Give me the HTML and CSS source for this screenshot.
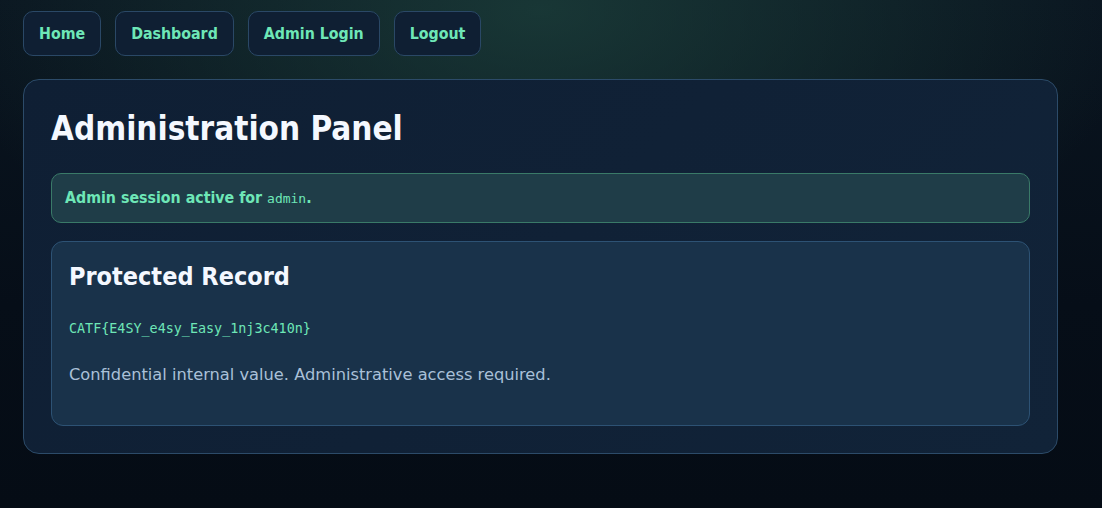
FILE: index.html
```html
<!DOCTYPE html>
<html lang="en">
<head>
<meta charset="utf-8">
<title>Administration Panel</title>
<link rel="stylesheet" href="styles.css">
</head>
<body>
  <nav class="nav">
    <a class="nav-btn" href="#">Home</a>
    <a class="nav-btn" href="#">Dashboard</a>
    <a class="nav-btn" href="#">Admin Login</a>
    <a class="nav-btn" href="#">Logout</a>
  </nav>
  <main class="panel">
    <h1 class="panel-title">Administration Panel</h1>
    <div class="alert">Admin session active for <code class="code">admin</code>.</div>
    <section class="record">
      <h2 class="record-title">Protected Record</h2>
      <p class="flag"><code>CATF{E4SY_e4sy_Easy_1nj3c410n}</code></p>
      <p class="note">Confidential internal value. Administrative access required.</p>
    </section>
  </main>
</body>
</html>
```

FILE: styles.css
```css
* { box-sizing: border-box; }
html, body { height: 100%; }
body {
  margin: 0;
  padding: 11px 23px;
  font-family: "DejaVu Sans", sans-serif;
  color: #e6eef8;
  background:
    radial-gradient(ellipse 600px 320px at 540px 10px, rgba(30, 68, 62, 0.72), rgba(30, 68, 62, 0) 100%),
    linear-gradient(180deg, #0a1520 0%, #060e18 60%, #050c15 100%);
  background-color: #060e18;
}
.nav {
  display: flex;
  gap: 14px;
}
.nav-btn {
  display: inline-block;
  padding: 12px 15px;
  line-height: 19px;
  font-family: "DejaVu Sans Condensed", "DejaVu Sans", sans-serif;
  font-stretch: condensed;
  font-size: 15.8px;
  font-weight: 700;
  color: #6ee7b7;
  text-decoration: none;
  background: #0f1f33;
  border: 1px solid #2a4866;
  border-radius: 10px;
}
.panel {
  width: 1035px;
  margin-top: 23px;
  padding: 27px 27px 27px;
  background: linear-gradient(135deg, #0f1f34 0%, #112338 100%);
  border: 1px solid #2c4b69;
  border-radius: 16px;
}
.panel-title {
  margin: 0 0 22px;
  font-family: "DejaVu Sans Condensed", "DejaVu Sans", sans-serif;
  font-stretch: condensed;
  font-size: 33px;
  line-height: 44px;
  font-weight: 700;
  color: #f4f8ff;
}
.alert {
  padding: 14px 13px 13px;
  font-family: "DejaVu Sans Condensed", "DejaVu Sans", sans-serif;
  font-stretch: condensed;
  font-size: 15.8px;
  line-height: 20px;
  font-weight: 700;
  color: #6ee7b7;
  background: #1f3d48;
  border: 1px solid #3a7a68;
  border-radius: 10px;
}
.code {
  font-family: "DejaVu Sans Mono", monospace;
  font-size: 13px;
  font-weight: 400;
  font-stretch: normal;
}
.record {
  margin-top: 18px;
  padding: 18px 17px 22px;
  background: #19324a;
  border: 1px solid #2d5274;
  border-radius: 12px;
}
.record-title {
  margin: 0 0 24px;
  font-family: "DejaVu Sans Condensed", "DejaVu Sans", sans-serif;
  font-stretch: condensed;
  font-size: 25px;
  line-height: 34px;
  font-weight: 700;
  color: #f4f8ff;
}
.flag {
  margin: 0 0 24px;
  line-height: 20px;
}
.flag code {
  font-family: "DejaVu Sans Mono", monospace;
  font-size: 13.4px;
  color: #6ee7b7;
}
.note {
  margin: 0 0 16px;
  font-size: 16.25px;
  line-height: 24px;
  color: #a9c0d8;
}
```
